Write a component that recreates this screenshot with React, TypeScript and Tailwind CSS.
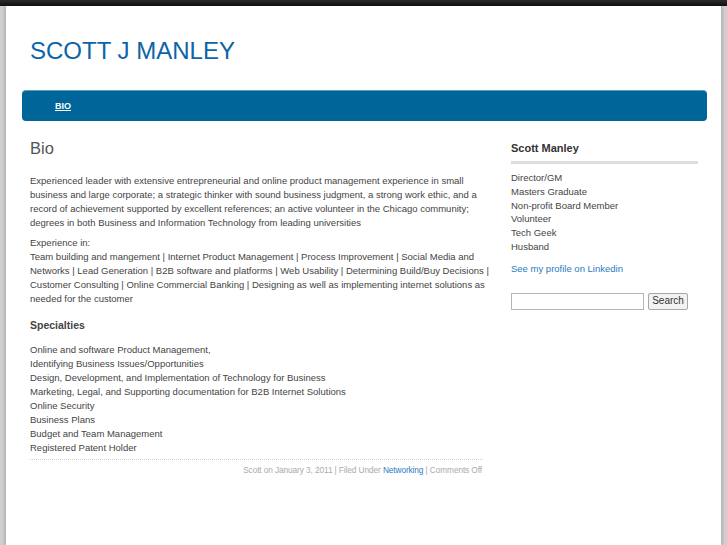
const experience = [
  "Team building and mangement",
  "Internet Product Management",
  "Process Improvement",
  "Social Media and Networks",
  "Lead Generation",
  "B2B software and platforms",
  "Web Usability",
  "Determining Build/Buy Decisions",
  "Customer Consulting",
  "Online Commercial Banking",
  "Designing as well as implementing internet solutions as needed for the customer",
];

const specialties = [
  "Online and software Product Management,",
  "Identifying Business Issues/Opportunities",
  "Design, Development, and Implementation of Technology for Business",
  "Marketing, Legal, and Supporting documentation for B2B Internet Solutions",
  "Online Security",
  "Business Plans",
  "Budget and Team Management",
  "Registered Patent Holder",
];

const roles = [
  "Director/GM",
  "Masters Graduate",
  "Non-profit Board Member",
  "Volunteer",
  "Tech Geek",
  "Husband",
];

function Sidebar() {
  return (
    <aside className="w-[187px] pt-[5px]">
      <h3 className="text-[11px] font-bold text-[#333] leading-[14px]">Scott Manley</h3>
      <div className="mt-[6px] h-[3px] bg-[#dddddd]" />
      <ul className="mt-[7px] text-[9.5px] leading-[13.8px] text-[#444]">
        {roles.map((r) => (
          <li key={r}>{r}</li>
        ))}
      </ul>
      <a className="mt-[8px] block text-[9.5px] leading-[14px] text-[#2a7abf]">
        See my profile on Linkedin
      </a>
      <form className="mt-[17px] flex items-center gap-[4px]">
        <input
          type="text"
          className="w-[133px] h-[17px] border border-[#b5b5b5] bg-white"
        />
        <button
          type="button"
          className="h-[17px] w-[40px] border border-[#a8a8a8] rounded-[2px] bg-[#f2f2f2] text-[10px] leading-none text-[#333]"
        >
          Search
        </button>
      </form>
    </aside>
  );
}

function Post() {
  return (
    <article className="w-[462px] text-[#444]">
      <h2 className="text-[16.5px] leading-[20px] text-[#555] pt-[2px]">Bio</h2>
      <p className="mt-[16px] text-[9.5px] leading-[14px]">
        Experienced leader with extensive entrepreneurial and online product management
        experience in small business and large corporate; a strategic thinker with sound
        business judgment, a strong work ethic, and a record of achievement supported by
        excellent references; an active volunteer in the Chicago community; degrees in both
        Business and Information Technology from leading universities
      </p>
      <p className="mt-[6px] text-[9.5px] leading-[14px]">
        Experience in:
        <br />
        {experience.join(" | ")}
      </p>
      <h4 className="mt-[12px] text-[10.5px] font-bold leading-[14px] text-[#444]">Specialties</h4>
      <ul className="mt-[11px] text-[9.5px] leading-[14px]">
        {specialties.map((s) => (
          <li key={s}>{s}</li>
        ))}
      </ul>
      <div className="mt-[4px] mr-[9px] border-t border-dotted border-[#cfcfcf]" />
      <div className="mt-[4px] mr-[10px] text-right text-[8.3px] leading-[12px] text-[#aaa] tracking-[-0.1px]">
        Scott on January 3, 2011 | Filed Under{" "}
        <a className="text-[#2a7abf]">Networking</a> | Comments Off
      </div>
    </article>
  );
}

export default function App() {
  return (
    <div className="min-h-[545px] bg-[#cfcfcf] font-['Liberation_Sans',Arial,sans-serif]">
      <div className="h-[6px] bg-gradient-to-b from-[#2a2a2a] to-[#111]" />
      <div className="mx-[6px] min-h-[539px] bg-white shadow-[-2px_0_2px_rgba(0,0,0,0.12),2px_0_2px_rgba(0,0,0,0.12)]">
        <header className="px-[24px] pt-[30px] h-[84px]">
          <h1 className="text-[24px] leading-[30px] text-[#0d64a6] tracking-[0px]">
            SCOTT J MANLEY
          </h1>
        </header>
        <nav className="mx-[16px] mr-[14px] h-[31px] rounded-[4px] bg-[#006598] border-t border-[#5d9cc4] flex items-center pl-[33px]">
          <a className="text-[9px] font-bold text-white underline leading-none">BIO</a>
        </nav>
        <div className="flex pl-[24px] pt-[15px] gap-[19px]">
          <Post />
          <Sidebar />
        </div>
      </div>
    </div>
  );
}
